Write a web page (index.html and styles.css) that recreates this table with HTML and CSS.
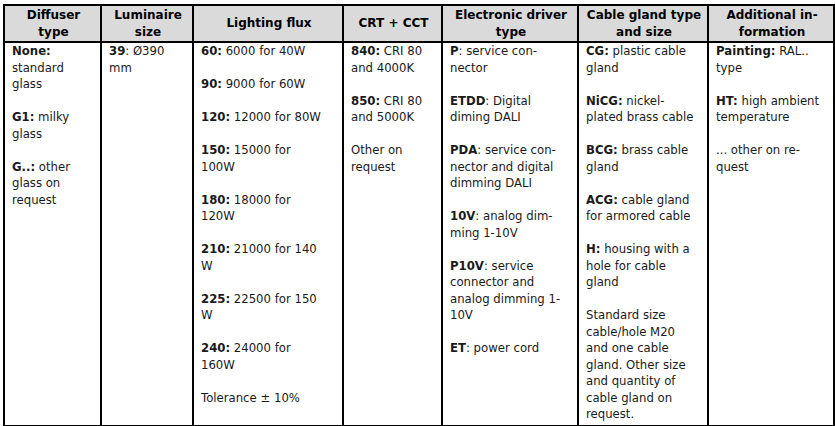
FILE: index.html
```html
<!DOCTYPE html>
<html>
<head>
<meta charset="utf-8">
<link rel="stylesheet" href="styles.css">
</head>
<body>
<table class="spec">
  <colgroup>
    <col class="c1"><col class="c2"><col class="c3"><col class="c4"><col class="c5"><col class="c6"><col class="c7">
  </colgroup>
  <thead>
    <tr>
      <th>Diffuser<br>type</th>
      <th>Luminaire<br>size</th>
      <th>Lighting flux</th>
      <th>CRT + CCT</th>
      <th>Electronic driver<br>type</th>
      <th>Cable gland type<br>and size</th>
      <th>Additional in-<br>formation</th>
    </tr>
  </thead>
  <tbody>
    <tr>
      <td>
        <p><b>None:</b><br>standard<br>glass</p>
        <p><b>G1:</b> milky<br>glass</p>
        <p><b>G..:</b> other<br>glass on<br>request</p>
      </td>
      <td>
        <p><b>39</b>: Ø390<br>mm</p>
      </td>
      <td>
        <p><b>60:</b> 6000 for 40W</p>
        <p><b>90:</b> 9000 for 60W</p>
        <p><b>120:</b> 12000 for 80W</p>
        <p><b>150:</b> 15000 for<br>100W</p>
        <p><b>180:</b> 18000 for<br>120W</p>
        <p><b>210:</b> 21000 for 140<br>W</p>
        <p><b>225:</b> 22500 for 150<br>W</p>
        <p><b>240:</b> 24000 for<br>160W</p>
        <p>Tolerance ± 10%</p>
      </td>
      <td>
        <p><b>840:</b> CRI 80<br>and 4000K</p>
        <p><b>850:</b> CRI 80<br>and 5000K</p>
        <p>Other on<br>request</p>
      </td>
      <td>
        <p><b>P</b>: service con-<br>nector</p>
        <p><b>ETDD</b>: Digital<br>diming DALI</p>
        <p><b>PDA</b>: service con-<br>nector and digital<br>dimming DALI</p>
        <p><b>10V</b>: analog dim-<br>ming 1-10V</p>
        <p><b>P10V</b>: service<br>connector and<br>analog dimming 1-<br>10V</p>
        <p><b>ET</b>: power cord</p>
      </td>
      <td>
        <p><b>CG:</b> plastic cable<br>gland</p>
        <p><b>NiCG:</b> nickel-<br>plated brass cable</p>
        <p><b>BCG:</b> brass cable<br>gland</p>
        <p><b>ACG:</b> cable gland<br>for armored cable</p>
        <p><b>H:</b> housing with a<br>hole for cable<br>gland</p>
        <p>Standard size<br>cable/hole M20<br>and one cable<br>gland. Other size<br>and quantity of<br>cable gland on<br>request.</p>
      </td>
      <td>
        <p><b>Painting:</b> RAL..<br>type</p>
        <p><b>HT:</b> high ambient<br>temperature</p>
        <p>... other on re-<br>quest</p>
      </td>
    </tr>
  </tbody>
</table>
</body>
</html>
```

FILE: styles.css
```css
html, body {
  margin: 0;
  padding: 0;
  background: #ffffff;
}
body {
  padding: 4px 0 0 3px;
  font-family: "DejaVu Sans", Verdana, sans-serif;
  color: #1a1a1a;
}
.spec {
  border-collapse: collapse;
  table-layout: fixed;
  width: 831px;
  font-size: 11.7px;
  line-height: 16.5px;
}
.spec th,
.spec td {
  border: 2px solid #000;
  padding: 0 5px 0 7px;
}
.spec th {
  background: #dadada;
  font-weight: bold;
  text-align: center;
  vertical-align: middle;
  padding-top: 1px;
  padding-bottom: 1px;
  font-size: 12px;
  color: #000;
  white-space: nowrap;
}
.spec td {
  vertical-align: top;
  white-space: nowrap;
  padding-bottom: 2px;
}
.spec p {
  margin: 0 0 16.5px;
}
.spec p:last-child {
  margin-bottom: 0;
}
.c1 { width: 97px; }
.c2 { width: 92px; }
.c3 { width: 150px; }
.c4 { width: 99px; }
.c5 { width: 136px; }
.c6 { width: 130px; }
.c7 { width: 126px; }
```
